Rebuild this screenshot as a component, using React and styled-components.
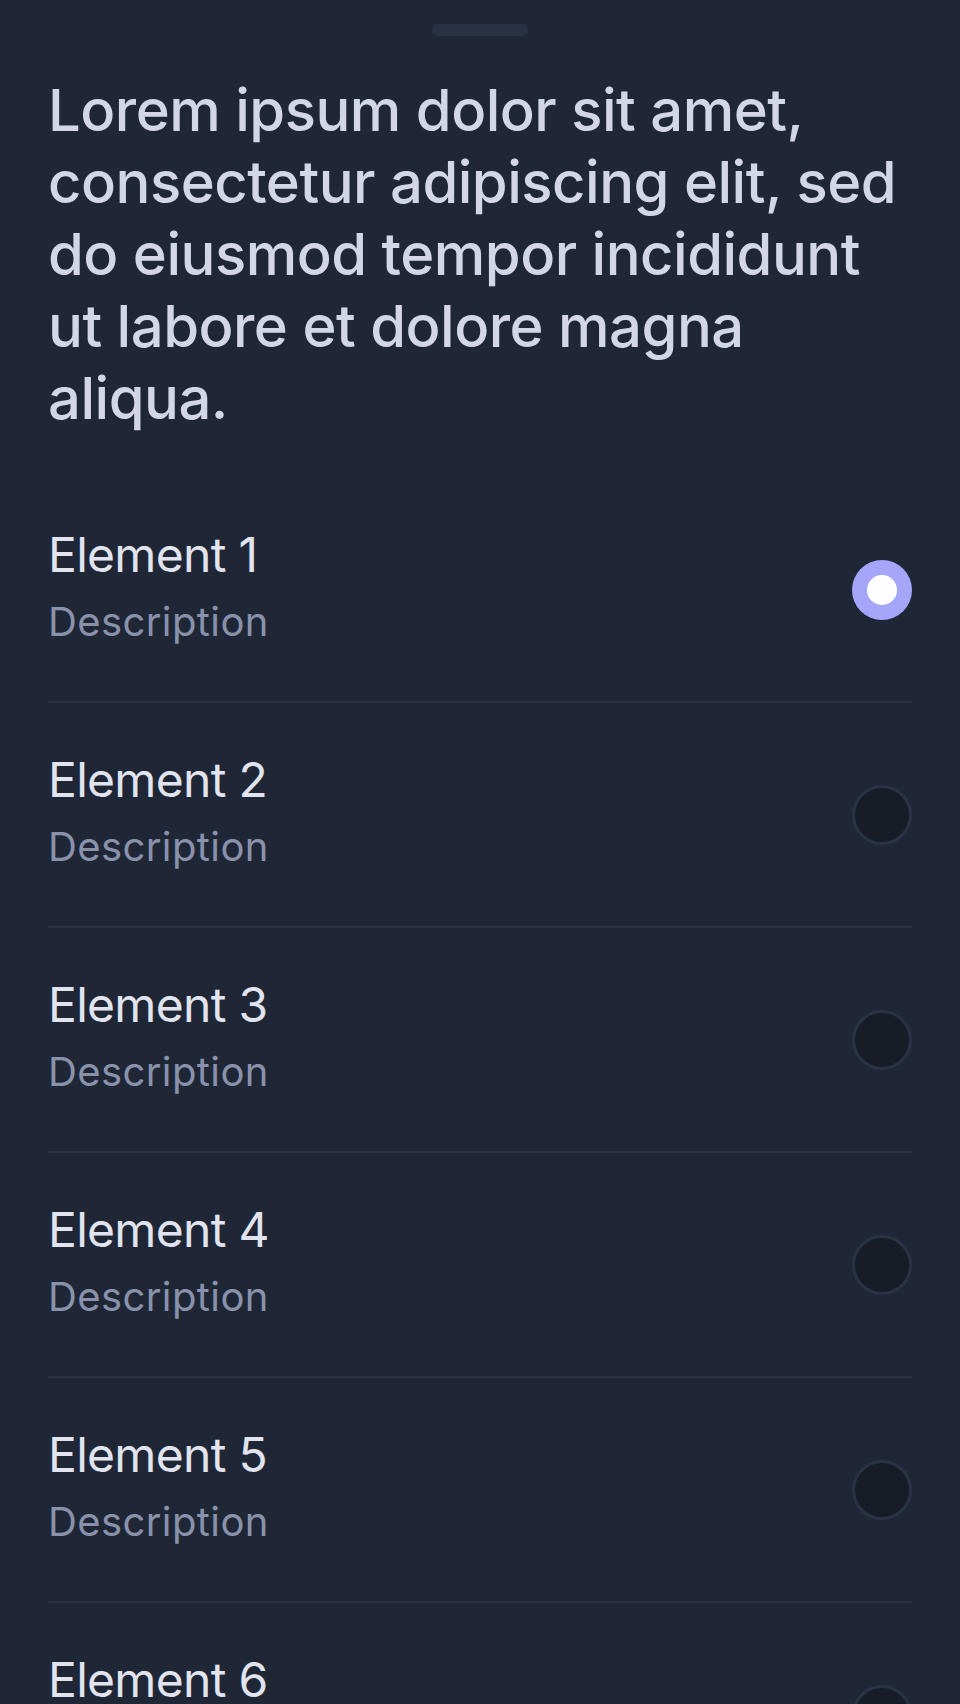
import React, { useState } from 'react';
import styled, { createGlobalStyle } from 'styled-components';

const GlobalStyle = createGlobalStyle`
    html, body {
        margin: 0;
        padding: 0;
        background: #1f2737;
    }
    body {
        font-family: Inter, "Noto Sans", "Liberation Sans", sans-serif;
        -webkit-font-smoothing: antialiased;
    }
`;

const Sheet = styled.div`
    width: 960px;
    height: 1704px;
    box-sizing: border-box;
    padding: 24px 48px 0;
    background: #1f2737;
    overflow: hidden;
`;

const Handle = styled.div`
    width: 96px;
    height: 12px;
    margin: 0 auto;
    border-radius: 6px;
    background: #2a3346;
`;

const Title = styled.h1`
    margin: 38px 0 0;
    font-size: 58px;
    line-height: 72px;
    font-weight: 500;
    color: #d3d6e6;
    letter-spacing: -0.5px;
`;

const List = styled.div`
    margin-top: 44px;
    display: flex;
    flex-direction: column;
`;

const Row = styled.label`
    height: 223px;
    flex-shrink: 0;
    display: flex;
    align-items: center;
    justify-content: space-between;
    border-bottom: 2px solid #2a3142;
    cursor: pointer;
`;

const Text = styled.div`
    display: flex;
    flex-direction: column;
    padding-bottom: 6px;
`;

const Name = styled.div`
    font-size: 48px;
    line-height: 64px;
    letter-spacing: -0.7px;
    color: #e1e4ef;
`;

const Desc = styled.div`
    margin-top: 7px;
    font-size: 40px;
    line-height: 56px;
    letter-spacing: 0.4px;
    color: #8a92ab;
`;

const Radio = styled.span`
    width: 60px;
    height: 60px;
    box-sizing: border-box;
    border-radius: 50%;
    flex-shrink: 0;
    display: flex;
    align-items: center;
    justify-content: center;
    background: ${(p) => (p.checked ? '#a5a6fa' : '#181c27')};
    border: ${(p) => (p.checked ? 'none' : '3px solid #2a3346')};

    &::after {
        content: '';
        width: 30px;
        height: 30px;
        border-radius: 50%;
        background: #ffffff;
        display: ${(p) => (p.checked ? 'block' : 'none')};
    }
`;

const items = [1, 2, 3, 4, 5, 6, 7];

const App = () => {
    const [selected, setSelected] = useState(1);

    return (
        <Sheet>
            <GlobalStyle />
            <Handle />
            <Title>
                Lorem ipsum dolor sit amet, consectetur adipiscing elit, sed do eiusmod tempor incididunt ut labore et dolore magna aliqua.
            </Title>
            <List>
                {items.map((n) => (
                    <Row key={n} onClick={() => setSelected(n)}>
                        <Text>
                            <Name>Element {n}</Name>
                            <Desc>Description</Desc>
                        </Text>
                        <Radio checked={selected === n} />
                    </Row>
                ))}
            </List>
        </Sheet>
    );
};

export default App;
